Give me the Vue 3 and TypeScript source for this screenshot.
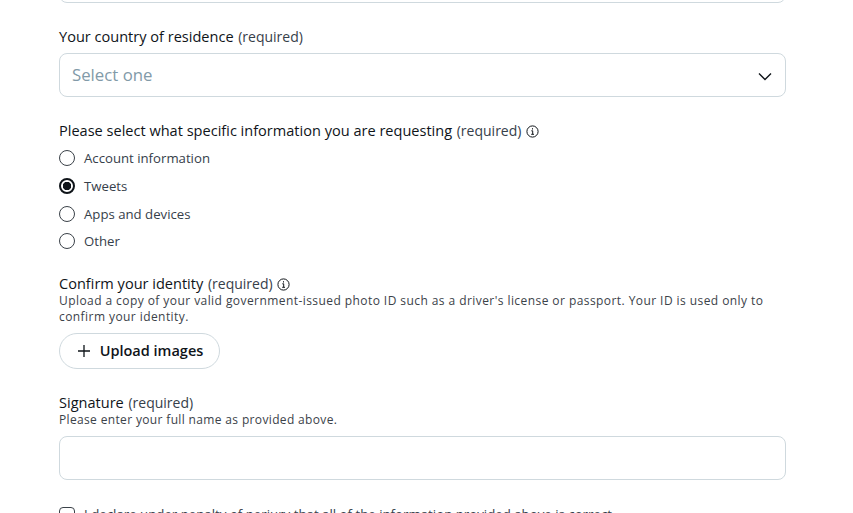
<script setup lang="ts">
const options = [
  { label: 'Account information', checked: false },
  { label: 'Tweets', checked: true },
  { label: 'Apps and devices', checked: false },
  { label: 'Other', checked: false },
]
</script>

<template>
  <main class="page">
    <form class="form" @submit.prevent>
      <div class="box cut"></div>

      <section class="field country">
        <div class="label"><b>Your country of residence</b> (required)</div>
        <div class="box select">
          <span class="placeholder">Select one</span>
          <svg class="chev" width="14" height="9" viewBox="0 0 14 9"><path d="M1 1.5l6 6 6-6" fill="none" stroke="#0f1419" stroke-width="1.4"/></svg>
        </div>
      </section>

      <section class="field info">
        <div class="label">
          <b>Please select what specific information you are requesting</b> (required)
          <svg class="i" width="13" height="13" viewBox="0 0 13 13"><circle cx="6.5" cy="6.5" r="5.6" fill="none" stroke="#0f1419" stroke-width="1"/><path d="M5.3 5.8h1.4v3.4M5.2 9.3h2.8M6.5 3.2v1.3" fill="none" stroke="#0f1419" stroke-width="1"/></svg>
        </div>
        <div class="radios">
          <label v-for="o in options" :key="o.label" class="radio">
            <span class="dot" :class="{ on: o.checked }"></span>
            <span>{{ o.label }}</span>
          </label>
        </div>
      </section>

      <section class="field identity">
        <div class="label">
          <b>Confirm your identity</b> (required)
          <svg class="i" width="13" height="13" viewBox="0 0 13 13"><circle cx="6.5" cy="6.5" r="5.6" fill="none" stroke="#0f1419" stroke-width="1"/><path d="M5.3 5.8h1.4v3.4M5.2 9.3h2.8M6.5 3.2v1.3" fill="none" stroke="#0f1419" stroke-width="1"/></svg>
        </div>
        <p class="help wide">Upload a copy of your valid government-issued photo ID such as a driver's license or passport. Your ID is used only to confirm your identity.</p>
        <button type="button" class="upload">
          <svg width="12" height="12" viewBox="0 0 12 12"><path d="M6 0v12M0 6h12" stroke="#0f1419" stroke-width="1.3"/></svg>
          <span>Upload images</span>
        </button>
      </section>

      <section class="field signature">
        <div class="label"><b>Signature</b> (required)</div>
        <p class="help">Please enter your full name as provided above.</p>
        <div class="box input"></div>
      </section>

      <label class="declare">
        <span class="check"></span>
        <span>I declare under penalty of perjury that all of the information provided above is correct.</span>
      </label>
    </form>
  </main>
</template>

<style>
html, body { margin: 0; height: 513px; overflow: hidden; background: #fff; }
</style>

<style scoped>
.page {
  height: 513px;
  overflow: hidden;
  font-family: "Open Sans", "Noto Sans", sans-serif;
  color: #0f1419;
}
.form { margin: -41px 67px 0 59px; }
.box {
  box-sizing: border-box;
  height: 44px;
  border: 1px solid #cfd9de;
  border-radius: 8px;
  background: #fff;
}
.field { display: block; }
.country { margin-top: 24px; }
.info { margin-top: 24px; }
.identity { margin-top: 18.7px; }
.signature { margin-top: 24px; }
.label { box-sizing: border-box; height: 18px; padding-top: 1px; font-size: 14px; line-height: 18px; color: #36404a; }
.label b { font-size: 14.55px; line-height: 1; font-weight: 500; color: #0f1419; margin-right: 1px; }
.i { vertical-align: -2px; margin-left: 1px; }
.select {
  margin-top: 8px;
  display: flex;
  align-items: center;
  justify-content: space-between;
  padding: 0 13px 0 12px;
}
.placeholder { font-size: 16.8px; color: #829aa8; margin-bottom: 2px; }
.chev { margin-top: 2px; }
.radios { margin-top: 5.3px; display: flex; flex-direction: column; }
.radio { display: flex; align-items: center; gap: 9px; height: 27.7px; font-size: 13.2px; color: #36404a; }
.dot {
  box-sizing: border-box;
  width: 16px; height: 16px;
  border: 1px solid #3b4249;
  border-radius: 50%;
}
.dot.on {
  border: 2px solid #0f1419;
  background: radial-gradient(circle, #0f1419 0 4px, #fff 4.5px);
}
.help {
  margin: 1px 0 0;
  font-size: 12px;
  line-height: 16px;
  letter-spacing: .35px;
  color: #3b4249;
}
.help.wide { letter-spacing: .43px; }
.upload {
  margin-top: 8px;
  box-sizing: border-box;
  height: 36px;
  width: 161px;
  display: flex;
  align-items: center;
  justify-content: center;
  gap: 10px;
  padding: 0 0 0 2px;
  border: 1px solid #cfd9de;
  border-radius: 18px;
  background: #fff;
  font: 600 14.5px "Open Sans", sans-serif;
  color: #0f1419;
}
.input { margin-top: 8px; }
.declare {
  margin-top: 27px;
  display: flex;
  align-items: flex-start;
  gap: 9px;
  font-size: 13.25px;
  line-height: 15px;
  color: #36404a;
}
.check {
  box-sizing: border-box;
  flex: none;
  width: 16px; height: 16px;
  border: 1px solid #3b4249;
  border-radius: 4px;
}
</style>
